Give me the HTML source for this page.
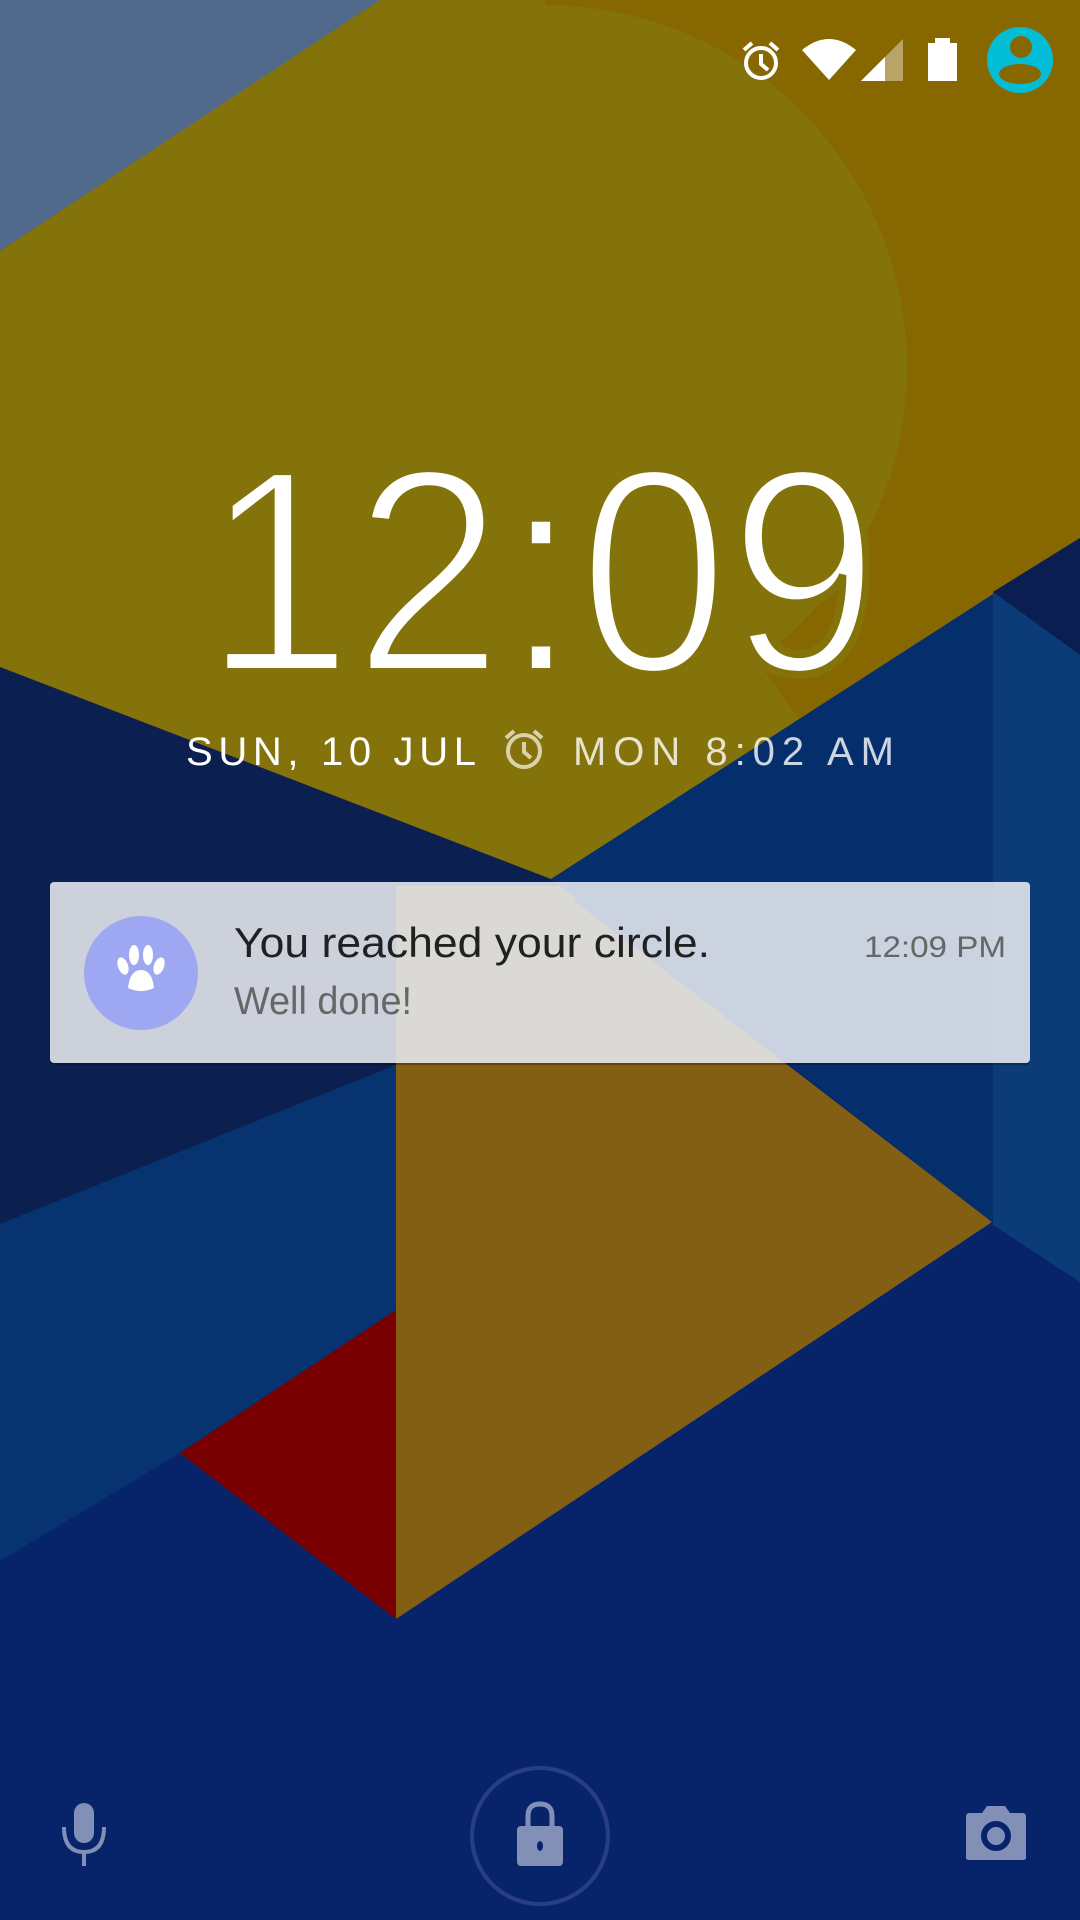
<!DOCTYPE html>
<html><head><meta charset="utf-8"><style>
html,body{margin:0;padding:0;width:1080px;height:1920px;overflow:hidden;background:#062470}
svg{display:block}
</style></head><body>
<svg width="1080" height="1920" viewBox="0 0 1080 1920" xmlns="http://www.w3.org/2000/svg">
<rect x="0" y="0" width="1080" height="1920" fill="#07246b"/>
<rect x="0" y="0" width="1080" height="900" fill="#876800"/>
<!-- golden -->
<polygon points="396,764 992,1222 396,1619" fill="#825f13"/>
<polygon points="0,0 380,0 0,251" fill="#51698b"/>
<polygon points="0,251 380,0 545,0 545,367 800,720 551,879 0,667" fill="#84730a"/>
<circle cx="545" cy="367" r="362" fill="#84730a"/>
<!-- right blue -->
<polygon points="551,879 1080,538 1080,1282 992,1222" fill="#042e6c"/>
<polygon points="993,592 1080,538 1080,1282 993,1225" fill="#0b3c78"/>
<polygon points="993,592 1080,538 1080,655" fill="#0a1e52"/>
<!-- left navy -->
<polygon points="0,667 551,879 560,886 396,886 396,1065 0,1224" fill="#0b1f50"/>
<!-- medium blue band -->
<polygon points="0,1224 396,1065 396,1310 180,1453 0,1561" fill="#073370"/>
<!-- red -->
<polygon points="180,1453 396,1310 396,1619" fill="#780000"/>

<!-- status bar -->
<g fill="none" stroke="#fff" stroke-width="4">
  <circle cx="761" cy="63" r="15"/>
  <path d="M761 54 V64 L768 70"/>
  <path d="M744 50 L752 43 M778 50 L770 43"/>
</g>
<path d="M802 50 Q829 28 856 50 L829 80 Z" fill="#fff"/>
<polygon points="861,81 903,39 903,81" fill="#fff" fill-opacity="0.4"/>
<polygon points="861,81 885,57 885,81" fill="#fff"/>
<rect x="935" y="38" width="15" height="6" fill="#fff"/>
<rect x="928" y="43" width="29" height="38" fill="#fff"/>
<circle cx="1020" cy="60" r="33" fill="#03bcd5"/>
<circle cx="1021" cy="47" r="11" fill="#876800"/>
<ellipse cx="1020" cy="74" rx="21" ry="10" fill="#876800"/>

<!-- clock -->
<text x="541" y="672" text-anchor="middle" font-family="Liberation Sans, sans-serif" font-size="292" fill="#fff" stroke="#84730a" stroke-width="8" textLength="676" lengthAdjust="spacingAndGlyphs">12:09</text>
<text x="186" y="765" font-family="Liberation Sans, sans-serif" font-size="40" fill="#fff" textLength="290" lengthAdjust="spacing">SUN, 10 JUL</text>
<g fill="none" stroke="#e8e2c8" stroke-width="4" opacity="0.85">
  <circle cx="524" cy="751" r="16"/>
  <path d="M524 742 V752 L531 758"/>
  <path d="M506 738 L514 731 M542 738 L534 731"/>
</g>
<text x="573" y="765" font-family="Liberation Sans, sans-serif" font-size="40" fill="#fff" fill-opacity="0.8" textLength="321" lengthAdjust="spacing">MON 8:02 AM</text>

<!-- notification -->
<rect x="50" y="884" width="980" height="181" rx="4" fill="#000" fill-opacity="0.25"/>
<rect x="50" y="882" width="980" height="181" rx="4" fill="#f2f5fb" fill-opacity="0.84"/>
<circle cx="141" cy="973" r="57" fill="#9ea7f1"/>
<g fill="#fff">
  <ellipse cx="123" cy="966" rx="5" ry="9" transform="rotate(-20 123 966)"/>
  <ellipse cx="134" cy="955" rx="5" ry="10"/>
  <ellipse cx="148" cy="955" rx="5" ry="10"/>
  <ellipse cx="159" cy="966" rx="5" ry="9" transform="rotate(20 159 966)"/>
  <path d="M128 988 Q130 970 141 970 Q152 970 154 988 Q141 994 128 988 Z"/>
</g>
<text x="234" y="957" font-family="Liberation Sans, sans-serif" font-size="42" fill="#212121" textLength="476" lengthAdjust="spacingAndGlyphs">You reached your circle.</text>
<text x="234" y="1014" font-family="Liberation Sans, sans-serif" font-size="39" fill="#666" textLength="178" lengthAdjust="spacingAndGlyphs">Well done!</text>
<text x="1006" y="957" text-anchor="end" font-family="Liberation Sans, sans-serif" font-size="30" fill="#666" textLength="142" lengthAdjust="spacingAndGlyphs">12:09 PM</text>

<!-- bottom -->
<g fill="#8290b8">
  <rect x="74" y="1803" width="20" height="40" rx="10"/>
  <path d="M64 1827 Q64 1852 84 1852 Q104 1852 104 1827" fill="none" stroke="#8290b8" stroke-width="4"/>
  <rect x="82" y="1851" width="4" height="15"/>
  <circle cx="540" cy="1836" r="68" fill="none" stroke="#2a3f82" stroke-width="4"/>
  <path d="M528 1828 V1816 Q528 1804 540 1804 Q552 1804 552 1816 V1828" fill="none" stroke="#8290b8" stroke-width="5"/>
  <rect x="517" y="1826" width="46" height="40" rx="4"/>
  <path d="M966 1816 Q966 1813 970 1813 H982 L987 1806 H1005 L1010 1813 H1022 Q1026 1813 1026 1816 V1858 Q1026 1860 1022 1860 H970 Q966 1860 966 1858 Z"/>
</g>
<ellipse cx="540" cy="1846" rx="3" ry="5" fill="#07246b"/>
<circle cx="996" cy="1836" r="12" fill="none" stroke="#07246b" stroke-width="6"/>
</svg>
</body></html>
